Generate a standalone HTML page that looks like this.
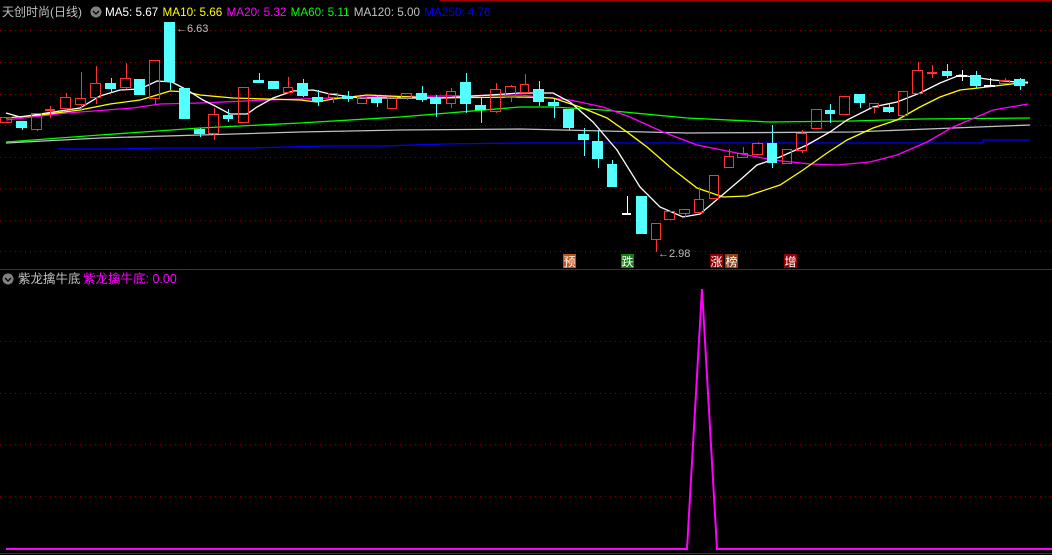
<!DOCTYPE html>
<html><head><meta charset="utf-8">
<style>
html,body{margin:0;padding:0;background:#000;width:1052px;height:555px;overflow:hidden}
svg{display:block}
text{font-family:"Liberation Sans","Noto Sans CJK SC",sans-serif}
</style></head><body>
<svg id="s" width="1052" height="555" xmlns="http://www.w3.org/2000/svg" shape-rendering="crispEdges">
<rect width="1052" height="555" fill="#000"/>
<line x1="440" y1="0.5" x2="1052" y2="0.5" stroke="#a00000"/>
<g stroke="#8a0000" stroke-dasharray="1,4">
<line x1="0" y1="30.5" x2="1052" y2="30.5"/><line x1="0" y1="62.5" x2="1052" y2="62.5"/>
<line x1="0" y1="94.5" x2="1052" y2="94.5"/><line x1="0" y1="125.5" x2="1052" y2="125.5"/>
<line x1="0" y1="157.5" x2="1052" y2="157.5"/><line x1="0" y1="188.5" x2="1052" y2="188.5"/>
<line x1="0" y1="220.5" x2="1052" y2="220.5"/><line x1="0" y1="251.5" x2="1052" y2="251.5"/>
<line x1="0" y1="341.5" x2="1052" y2="341.5"/><line x1="0" y1="393.5" x2="1052" y2="393.5"/>
<line x1="0" y1="444.5" x2="1052" y2="444.5"/><line x1="0" y1="496.5" x2="1052" y2="496.5"/>
</g>
<line x1="0" y1="269.5" x2="1052" y2="269.5" stroke="#b00000"/>
<line x1="0" y1="553.5" x2="1052" y2="553.5" stroke="#b00000"/>
<g fill="none" stroke-width="1.3" shape-rendering="auto">
<polyline stroke="#0000ff" points="58,149 118,149 160,148 250,148 325,146 383,146 443,144 520,143 983,143 983,140 1030,140"/>
<polyline stroke="#c0c0c0" points="6,143 100,138 200,135 300,132 400,130 520,129 687,133 853,132 953,128 1030,125"/>
<polyline stroke="#00ff00" points="6,142 100,135 200,128 300,123 400,117 520,107 553,107 603,110 687,118 770,122 853,121 920,119 1030,118"/>
<polyline stroke="#ff00ff" points="6,120 67,113 133,108 160,104 200,103 267,100 367,97 520,95 570,100 603,107 630,117 663,132 697,145 737,153 773,160 810,164 837,165 870,162 897,155 927,142 953,127 993,110 1028,104"/>
<polyline stroke="#ffff00" points="6,118 40,115 80,110 110,104 140,100 157,95 170,91 187,92 200,95 233,98 267,99 300,100 317,102 333,99 367,95 433,98 520,97 553,98 580,107 607,118 627,132 647,147 670,167 697,188 723,197 747,196 780,185 803,170 827,153 847,140 873,128 897,120 920,107 940,97 960,90 987,87 1028,82"/>
<polyline stroke="#ffffff" points="6,113 20,117 80,108 100,96 120,90 140,89 157,81 172,82 187,90 203,100 217,107 230,114 247,114 257,107 273,98 293,91 313,90 330,94 360,98 400,98 443,98 520,93 553,93 570,102 593,122 617,150 640,187 660,207 683,217 700,214 720,197 740,180 757,165 780,157 807,145 830,132 847,120 873,107 897,102 920,93 940,83 960,75 993,80 1028,83"/>
</g>
<g id="c"></g>
<text x="176" y="32" fill="#c0c0c0" font-size="11">←6.63</text>
<text x="658" y="257" fill="#c0c0c0" font-size="11">←2.98</text>
<rect x="563" y="254" width="13" height="14" fill="#c05018"/><text x="563.5" y="266" fill="#fff" font-size="12">预</text>
<rect x="621" y="254" width="13" height="14" fill="#108010"/><text x="621.5" y="266" fill="#fff" font-size="12">跌</text>
<rect x="710" y="254" width="13" height="14" fill="#900000"/><text x="710.5" y="266" fill="#fff" font-size="12">涨</text>
<rect x="725" y="254" width="13" height="14" fill="#904010"/><text x="725.5" y="266" fill="#fff" font-size="12">榜</text>
<rect x="784" y="254" width="13" height="14" fill="#900000"/><text x="784.5" y="266" fill="#fff" font-size="12">增</text>
<text x="2" y="16" fill="#c0c0c0" font-size="12">天创时尚(日线)</text>
<circle cx="96" cy="12" r="5.5" fill="#808080"/><path d="M93 11 L96 14 L99 11" stroke="#000" fill="none" stroke-width="1.3" shape-rendering="auto"/>
<text x="105" y="16" font-size="11.7"><tspan fill="#ffffff">MA5: 5.67 </tspan><tspan fill="#ffff00" dx="1">MA10: 5.66 </tspan><tspan fill="#ff00ff" dx="1">MA20: 5.32 </tspan><tspan fill="#00ff00" dx="1">MA60: 5.11 </tspan><tspan fill="#c0c0c0" dx="1">MA120: 5.00 </tspan><tspan fill="#0000ff" dx="1">MA250: 4.76</tspan></text>
<circle cx="8" cy="279" r="5.5" fill="#808080"/><path d="M5 278 L8 281 L11 278" stroke="#000" fill="none" stroke-width="1.3" shape-rendering="auto"/>
<text x="18" y="283" fill="#c0c0c0" font-size="12.5">紫龙擒牛底</text>
<text x="83" y="283" fill="#ff00ff" font-size="12.5">紫龙擒牛底: 0.00</text>
<polyline fill="none" stroke="#ff00ff" stroke-width="2" points="6,549 687,549 702,289 717,549 1052,549" shape-rendering="auto"/>
</svg>
<script>
var C=[[0,12,117,122,117,122,'r'],[16,27,121,128,121,130,'c'],[31,42,113,129,113,131,'r'],[45,55,109,110,106,118,'x'],[60,71,97,108,93,110,'r'],[75,86,98,104,72,111,'r'],[90,101,83,97,66,104,'r'],[105,116,83,89,78,93,'c'],[120,131,78,87,63,89,'r'],[134,145,79,95,79,95,'c'],[149,160,60,98,60,105,'r'],[164,175,22,82,22,90,'c'],[179,190,88,119,88,119,'c'],[194,205,129,134,128,137,'c'],[208,219,114,133,108,140,'r'],[223,233,115,119,109,122,'c'],[238,249,87,122,87,122,'r'],[253,264,80,83,73,83,'c'],[268,279,81,89,81,89,'c'],[283,293,87,92,77,93,'r'],[297,308,83,96,79,97,'c'],[312,323,97,102,90,106,'c'],[328,338,93,97,93,103,'r'],[342,353,96,99,91,102,'c'],[357,367,97,103,97,103,'r'],[371,382,98,103,95,107,'c'],[387,397,97,108,97,108,'r'],[401,412,93,97,93,100,'r'],[416,427,93,100,86,102,'c'],[430,441,98,104,95,117,'c'],[446,456,91,103,88,108,'r'],[460,471,82,104,73,113,'c'],[475,486,105,110,98,123,'c'],[490,501,89,111,83,113,'r'],[505,516,86,97,85,102,'r'],[520,529,84,92,74,93,'r'],[533,544,89,102,81,106,'c'],[548,559,102,106,99,118,'c'],[563,574,109,128,109,130,'c'],[578,589,134,140,128,156,'c'],[592,603,141,159,130,168,'c'],[607,617,164,187,160,187,'c'],[622,631,213,213,196,213,'t'],[636,647,196,234,196,234,'c'],[651,661,223,239,223,252,'r'],[664,675,211,219,211,219,'r'],[679,690,209,213,209,217,'r'],[694,704,199,212,187,212,'r'],[709,719,175,198,175,198,'r'],[724,734,156,167,149,167,'r'],[737,748,153,157,147,158,'r'],[752,763,143,154,142,154,'r'],[767,777,143,163,125,168,'c'],[782,792,149,163,149,163,'r'],[796,807,133,150,130,153,'r'],[811,822,109,128,109,128,'r'],[825,835,110,114,104,123,'c'],[839,850,96,114,96,114,'r'],[854,865,94,103,94,108,'c'],[869,879,103,107,103,113,'r'],[883,894,107,112,103,113,'c'],[898,908,91,115,91,115,'r'],[912,923,70,93,62,93,'r'],[927,937,72,73,65,78,'x'],[942,952,71,76,64,78,'c'],[956,967,75,75,70,81,'w'],[970,981,75,86,71,88,'c'],[984,995,85,85,78,85,'t'],[999,1010,80,83,78,83,'r'],[1014,1025,79,86,78,90,'c']];
var g=document.getElementById('c'),h='';
C.forEach(function(k){var x0=k[0],x1=k[1],t=k[2],b=k[3],wt=k[4],wb=k[5],ty=k[6],m=Math.round((x0+x1)/2)+0.5;
if(ty=='c'){h+='<line x1="'+m+'" y1="'+wt+'" x2="'+m+'" y2="'+wb+'" stroke="#54ffff"/><rect x="'+x0+'" y="'+t+'" width="'+(x1-x0)+'" height="'+Math.max(1,b-t)+'" fill="#54ffff"/>';}
else if(ty=='r'){h+='<line x1="'+m+'" y1="'+wt+'" x2="'+m+'" y2="'+t+'" stroke="#ff3232"/><line x1="'+m+'" y1="'+b+'" x2="'+m+'" y2="'+wb+'" stroke="#ff3232"/><rect x="'+(x0+0.5)+'" y="'+(t+0.5)+'" width="'+(x1-x0-1)+'" height="'+Math.max(1,b-t)+'" fill="none" stroke="#ff3232"/>';}
else{var col=ty=='x'?'#ff3232':'#ffffff';h+='<line x1="'+m+'" y1="'+wt+'" x2="'+m+'" y2="'+wb+'" stroke="'+col+'"/><rect x="'+x0+'" y="'+t+'" width="'+(x1-x0)+'" height="2" fill="'+col+'"/>';}
});
g.innerHTML=h;
</script>
</body></html>
